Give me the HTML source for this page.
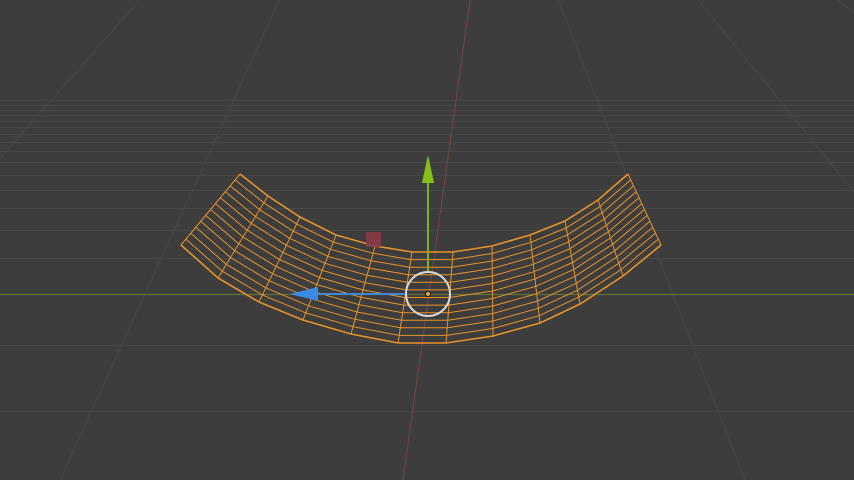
<!DOCTYPE html><html><head><style>html,body{margin:0;padding:0;background:#3d3d3d;overflow:hidden}</style></head><body>
<svg id="s" width="854" height="480" xmlns="http://www.w3.org/2000/svg" style="display:block">
<rect width="854" height="480" fill="#3d3d3d"/>
<g id="grid" stroke="#474747" stroke-width="1" fill="none"></g>
<line x1="403" y1="480" x2="470" y2="0" stroke="#7a4048" stroke-width="1"/>
<line x1="0" y1="294.5" x2="854" y2="294.5" stroke="#5d7338" stroke-width="1.2"/>
<g id="mesh" stroke="#e8922a" stroke-width="1" fill="none"></g>
<rect x="366" y="232" width="15" height="15" fill="#8a3a47" opacity="0.9"/>
<line x1="428" y1="182" x2="428" y2="272" stroke="#7fb01e" stroke-width="2"/>
<polygon points="428,155 422,183 434,183" fill="#86c016"/>
<line x1="316" y1="294" x2="406" y2="294" stroke="#3f86d6" stroke-width="2"/>
<polygon points="290,294 318,287 318,301" fill="#3a8ae6"/>
<circle cx="428" cy="294" r="22" fill="none" stroke="#d8d8d8" stroke-width="2"/>
<circle cx="428" cy="294" r="2.5" fill="#f0a030" stroke="#000" stroke-width="0.8"/>
</svg>
<script>
(function(){
var NS="http://www.w3.org/2000/svg";
function L(g,x1,y1,x2,y2){var l=document.createElementNS(NS,"line");l.setAttribute("x1",x1);l.setAttribute("y1",y1);l.setAttribute("x2",x2);l.setAttribute("y2",y2);g.appendChild(l);}
var g=document.getElementById("grid");
[411,345,258,230,208,190,175,162,151,142,134,127,121,115,110,105,100].forEach(function(y){L(g,0,y+.5,854,y+.5);});
var vx=430,vy=-330;
[-1655,-1312,-969,-626,-283,60,745,1088,1431,1774,2117].forEach(function(x){L(g,x,480,vx,vy);});
var tp=[[240,174],[268,196],[300,217],[336,235],[375,246],[412,252],[453,252],[492,246],[530,235],[565,221],[598,200],[628,174]];
var bt=[[181,245],[218,278],[259,302],[303,320],[351,334],[398,343],[446,343],[493,336],[540,323],[580,304],[623,276],[661,245]];
var m=document.getElementById("mesh");
for(var i=0;i<tp.length;i++)L(m,tp[i][0],tp[i][1],bt[i][0],bt[i][1]);
for(var k=0;k<=12;k++){var t=k/12,p=[];for(var j=0;j<tp.length;j++)p.push((tp[j][0]+(bt[j][0]-tp[j][0])*t).toFixed(1)+","+(tp[j][1]+(bt[j][1]-tp[j][1])*t).toFixed(1));
var pl=document.createElementNS(NS,"polyline");pl.setAttribute("points",p.join(" "));if(k==0||k==12)pl.setAttribute("stroke-width","1.6");m.appendChild(pl);}
var s=document.getElementById("s");
["rect","line","polygon","circle"].forEach(function(){});
/* move gizmo elements above mesh */
var kids=Array.prototype.slice.call(s.children);var idx=kids.indexOf(m);
for(var q=idx+1;q<kids.length;q++)s.appendChild(kids[q]);
})();
</script>
</body></html>
